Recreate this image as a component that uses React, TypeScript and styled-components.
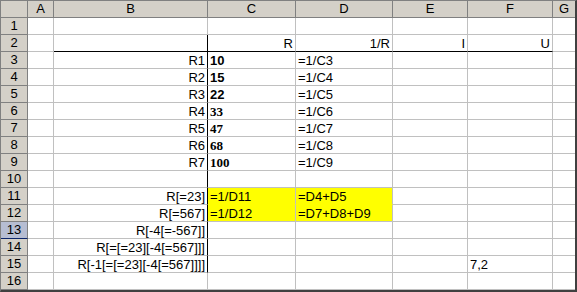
import React from "react";
import styled, { createGlobalStyle } from "styled-components";

const GlobalStyle = createGlobalStyle`
  html, body {
    margin: 0;
    padding: 0;
    background: #ffffff;
  }
`;

const GRID = "#c0c0c0";
const HEAD_LINE = "#808080";
const BLACK = "#000000";
const YELLOW = "#ffff00";

const Frame = styled.div`
  box-sizing: border-box;
  width: 577px;
  height: 292px;
  border-top: 1px solid #808080;
  border-left: 1px solid #808080;
  border-right: 2px solid #404040;
  border-bottom: 2px solid #404040;
  background: #ffffff;
  overflow: hidden;
`;

const Sheet = styled.div`
  display: grid;
  grid-template-columns: 27px 26px 154px 88px 97px 75px 85px 22px;
  grid-auto-rows: 17px;
  font-family: "Liberation Sans", Arial, sans-serif;
  font-size: 13px;
  color: #000000;
`;

const HeadCell = styled.div<{ $last?: boolean; $selected?: boolean }>`
  box-sizing: border-box;
  background: ${(p) => (p.$selected ? "#b6bdd2" : "#d4d0c8")};
  border-right: ${(p) => (p.$last ? "none" : `1px solid ${HEAD_LINE}`)};
  border-bottom: 1px solid ${(p) => (p.$selected ? "#0a246a" : HEAD_LINE)};
  text-align: center;
  line-height: 16px;
  white-space: nowrap;
`;

const Cell = styled.div<{
  $align: "left" | "right";
  $bold?: boolean;
  $serif?: boolean;
  $fill?: string;
  $right: string;
  $bottom: string;
  $last?: boolean;
}>`
  box-sizing: border-box;
  padding: 1px 2px 0 2px;
  line-height: 15px;
  white-space: nowrap;
  overflow: visible;
  text-align: ${(p) => p.$align};
  font-weight: ${(p) => (p.$bold ? 700 : 400)};
  font-family: ${(p) =>
    p.$serif
      ? `"Liberation Serif", "Times New Roman", serif`
      : `"Liberation Sans", Arial, sans-serif`};
  background: ${(p) => p.$fill ?? "#ffffff"};
  border-right: ${(p) => (p.$last ? "none" : `1px solid ${p.$right}`)};
  border-bottom: 1px solid ${(p) => p.$bottom};
`;

type CellDef = {
  text?: string;
  align?: "left" | "right";
  bold?: boolean;
  serif?: boolean;
};

const COLS = ["A", "B", "C", "D", "E", "F", "G"];

// Row contents, keyed by column letter
const ROWS: Record<number, Partial<Record<string, CellDef>>> = {
  2: {
    C: { text: "R", align: "right" },
    D: { text: "1/R", align: "right" },
    E: { text: "I", align: "right" },
    F: { text: "U", align: "right" },
  },
  3: { B: { text: "R1", align: "right" }, C: { text: "10", bold: true }, D: { text: "=1/C3" } },
  4: { B: { text: "R2", align: "right" }, C: { text: "15", bold: true }, D: { text: "=1/C4" } },
  5: { B: { text: "R3", align: "right" }, C: { text: "22", bold: true }, D: { text: "=1/C5" } },
  6: { B: { text: "R4", align: "right" }, C: { text: "33", bold: true, serif: true }, D: { text: "=1/C6" } },
  7: { B: { text: "R5", align: "right" }, C: { text: "47", bold: true, serif: true }, D: { text: "=1/C7" } },
  8: { B: { text: "R6", align: "right" }, C: { text: "68", bold: true, serif: true }, D: { text: "=1/C8" } },
  9: { B: { text: "R7", align: "right" }, C: { text: "100", bold: true, serif: true }, D: { text: "=1/C9" } },
  11: { B: { text: "R[=23]", align: "right" }, C: { text: "=1/D11" }, D: { text: "=D4+D5" } },
  12: { B: { text: "R[=567]", align: "right" }, C: { text: "=1/D12" }, D: { text: "=D7+D8+D9" } },
  13: { B: { text: "R[-4[=-567]]", align: "right" } },
  14: { B: { text: "R[=[=23][-4[=567]]]", align: "right" } },
  15: { B: { text: "R[-1[=[=23][-4[=567]]]]", align: "right" }, F: { text: "7,2" } },
};

const isYellow = (r: number, c: string) => (r === 11 || r === 12) && (c === "C" || c === "D");

function rightColor(r: number, c: string) {
  if (c === "B" && r >= 2 && r <= 15) return BLACK;
  return GRID;
}

function bottomColor(r: number, c: string) {
  if (r === 2 && ["B", "C", "D", "E", "F"].includes(c)) return BLACK;
  if (r === 11 && (c === "C" || c === "D")) return YELLOW;
  return GRID;
}

export default function App() {
  const rowNums = Array.from({ length: 16 }, (_, i) => i + 1);
  return (
    <>
      <GlobalStyle />
      <Frame>
        <Sheet>
          <HeadCell />
          {COLS.map((c, i) => (
            <HeadCell key={c} $last={i === COLS.length - 1}>
              {c}
            </HeadCell>
          ))}
          {rowNums.map((r) => (
            <React.Fragment key={r}>
              <HeadCell $selected={r === 13}>{r}</HeadCell>
              {COLS.map((c, i) => {
                const def = ROWS[r]?.[c];
                return (
                  <Cell
                    key={c}
                    $align={def?.align ?? "left"}
                    $bold={def?.bold}
                    $serif={def?.serif}
                    $fill={isYellow(r, c) ? YELLOW : undefined}
                    $right={rightColor(r, c)}
                    $bottom={bottomColor(r, c)}
                    $last={i === COLS.length - 1}
                  >
                    {def?.text ?? ""}
                  </Cell>
                );
              })}
            </React.Fragment>
          ))}
        </Sheet>
      </Frame>
    </>
  );
}
